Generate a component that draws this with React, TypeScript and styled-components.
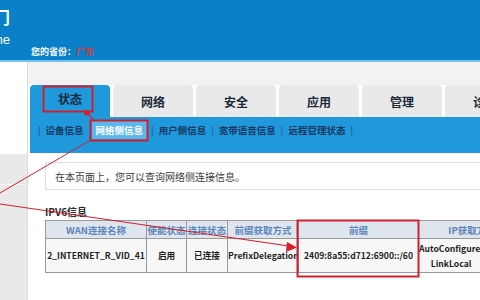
import React from 'react';
import styled, { createGlobalStyle } from 'styled-components';

// STYLES

const GlobalStyle = createGlobalStyle`
  html, body {
    margin: 0;
    padding: 0;
    overflow: hidden;
    background: #ffffff;
  }
  * {
    box-sizing: border-box;
  }
`
const Page = styled.div`
  width: 480px;
  height: 300px;
  overflow: hidden;
  position: relative;
  display: flex;
  flex-direction: column;
  font-family: "Noto Sans CJK SC", "Noto Sans", "Liberation Sans", sans-serif;
  background: #ffffff;
`
const Header = styled.div`
  height: 62px;
  flex-shrink: 0;
  background: #0a80c8;
  border-bottom: 2px solid #74c2ee;
  display: flex;
  align-items: stretch;
`
const LogoBox = styled.div`
  width: 10px;
  overflow: hidden;
  display: flex;
  flex-direction: column;
  align-items: flex-end;
  padding-top: 7px;
  color: #ffffff;
  white-space: nowrap;
  flex-shrink: 0;
`
const LogoTitle = styled.div`
  font-size: 17px;
  font-weight: 700;
  line-height: 20px;
`
const LogoSub = styled.div`
  font-size: 13px;
  line-height: 16px;
  margin-top: 5px;
  font-family: "Liberation Sans", sans-serif;
`
const Province = styled.div`
  align-self: flex-end;
  margin-left: 21px;
  margin-bottom: 2px;
  font-size: 9px;
  font-weight: 700;
  color: #ffffff;

  span {
    color: #e4342c;
  }
`
const Body = styled.div`
  flex: 1;
  display: flex;
  min-height: 0;
`
const Sidebar = styled.div`
  width: 28px;
  flex-shrink: 0;
  border-right: 1px solid #dcdcdc;
  display: flex;
  flex-direction: column;
  background: #e9e9e9;
`
const SideTop = styled.div`
  height: 92px;
  background: #ffffff;
`
const SideItem = styled.div`
  height: 31px;
  border-bottom: 1px solid #f6f6f6;
`
const Main = styled.div`
  flex: 1;
  min-width: 0;
  display: flex;
  flex-direction: column;
`
const TopStrip = styled.div`
  height: 23px;
  background: #f2f2f2;
`
const Tabs = styled.div`
  display: flex;
  gap: 3px;
  padding-left: 2px;
  height: 32px;
`
const Tab = styled.div<{ $active?: boolean }>`
  width: 80px;
  flex-shrink: 0;
  display: flex;
  align-items: center;
  justify-content: center;
  border-radius: 4px 4px 0 0;
  font-size: 12px;
  font-weight: 700;
  color: #1c2a3a;
  background: ${p => (p.$active ? '#1f98dc' : '#e9e9e9')};
  padding-bottom: ${p => (p.$active ? '5px' : '0')};
`
const SubNav = styled.div`
  margin-left: 2px;
  height: 36px;
  background: #1f98dc;
  display: flex;
  align-items: flex-start;
  padding: 4px 0 0 4px;
  font-size: 9.5px;
  font-weight: 700;
  color: #17365c;
  white-space: nowrap;
`
const Sep = styled.span`
  color: #2b4f78;
  font-weight: 400;
  padding: 0 4px;
  line-height: 18px;
`
const SubItem = styled.span<{ $active?: boolean }>`
  line-height: 18px;
  margin-left: ${p => (p.$active ? '7px' : '0')};
  padding: ${p => (p.$active ? '0 4px' : '0 1px')};
  color: ${p => (p.$active ? '#ffffff' : '#17365c')};
  background: ${p => (p.$active ? '#5cb8ec' : 'transparent')};
`
const Content = styled.div`
  padding: 9px 0 0 17px;
  display: flex;
  flex-direction: column;
`
const InfoBox = styled.div`
  height: 28px;
  border: 1px solid #dedede;
  border-right: none;
  display: flex;
  align-items: center;
  padding-left: 9px;
  font-size: 10px;
  color: #3c3c3c;
`
const SectionTitle = styled.div`
  margin-top: 15px;
  font-size: 10px;
  font-weight: 700;
  color: #2a2a2a;
  line-height: 14px;
`
const Table = styled.table`
  border-collapse: collapse;
  table-layout: fixed;
  width: 480px;
  margin-top: 1px;

  th, td {
    border: 1px solid #9a9a9a;
    text-align: center;
    padding: 0;
    white-space: nowrap;
    overflow: hidden;
  }
  th {
    height: 18px;
    background: #dfe5ec;
    color: #5a86bc;
    font-size: 9.5px;
    font-weight: 700;
  }
  td {
    height: 34px;
    background: #f7f7f7;
    color: #1e1e1e;
    font-size: 8.6px;
    font-weight: 700;
    line-height: 15px;
  }
`
const Overlay = styled.svg`
  position: absolute;
  left: 0;
  top: 0;
  pointer-events: none;
`
////////////////////////////////////////////////////////////////////////////////

const tabs = ['状态', '网络', '安全', '应用', '管理', '诊断']
const subItems = ['设备信息', '网络侧信息', '用户侧信息', '宽带语音信息', '远程管理状态']

export default function App() {
  return (
    <Page>
      <GlobalStyle />
      <Header>
        <LogoBox>
          <LogoTitle>中国移动门</LogoTitle>
          <LogoSub>Home</LogoSub>
        </LogoBox>
        <Province>
          您的省份：<span>广东</span>
        </Province>
      </Header>

      <Body>
        <Sidebar>
          <SideTop />
          <SideItem />
        </Sidebar>
        <Main>
          <TopStrip />
          <Tabs>
            {tabs.map((t, i) => (
              <Tab key={t} $active={i === 0}>{t}</Tab>
            ))}
          </Tabs>
          <SubNav>
            {subItems.map((s, i) => (
              <React.Fragment key={s}>
                {i !== 1 && <Sep>|</Sep>}
                <SubItem $active={i === 1}>{s}</SubItem>
              </React.Fragment>
            ))}
            <Sep>|</Sep>
          </SubNav>
          <Content>
            <InfoBox>在本页面上，您可以查询网络侧连接信息。</InfoBox>
            <SectionTitle>IPV6信息</SectionTitle>
            <Table>
              <colgroup>
                <col style={{ width: 101 }} />
                <col style={{ width: 40 }} />
                <col style={{ width: 41 }} />
                <col style={{ width: 71 }} />
                <col style={{ width: 120 }} />
                <col style={{ width: 107 }} />
              </colgroup>
              <thead>
                <tr>
                  <th>WAN连接名称</th>
                  <th>使能状态</th>
                  <th>连接状态</th>
                  <th>前缀获取方式</th>
                  <th>前缀</th>
                  <th>IP获取方式</th>
                </tr>
              </thead>
              <tbody>
                <tr>
                  <td>2_INTERNET_R_VID_41</td>
                  <td>启用</td>
                  <td>已连接</td>
                  <td>PrefixDelegation</td>
                  <td>2409:8a55:d712:6900::/60</td>
                  <td style={{ textAlign: 'left' }}>AutoConfigured<br />&nbsp;&nbsp;&nbsp;&nbsp;&nbsp;&nbsp;LinkLocal</td>
                </tr>
              </tbody>
            </Table>
          </Content>
        </Main>
      </Body>

      <Overlay width="480" height="300" viewBox="0 0 480 300">
        <g stroke="#d0202e" fill="none">
          <rect x="43.5" y="86.5" width="49" height="25" strokeWidth="2" />
          <rect x="90.5" y="120.5" width="57" height="20" strokeWidth="2" />
          <rect x="297.5" y="220.5" width="121" height="56" strokeWidth="2" />
          <line x1="88" y1="113" x2="93" y2="120" strokeWidth="1.2" />
          <line x1="89" y1="141" x2="0" y2="193" strokeWidth="1" />
          <line x1="0" y1="204" x2="289" y2="246" strokeWidth="1.2" />
        </g>
        <circle cx="87" cy="113" r="2.8" fill="#e01c2a" />
        <polygon points="297,247.5 287,242 286,252" fill="#e01c2a" />
      </Overlay>
    </Page>
  )
}
